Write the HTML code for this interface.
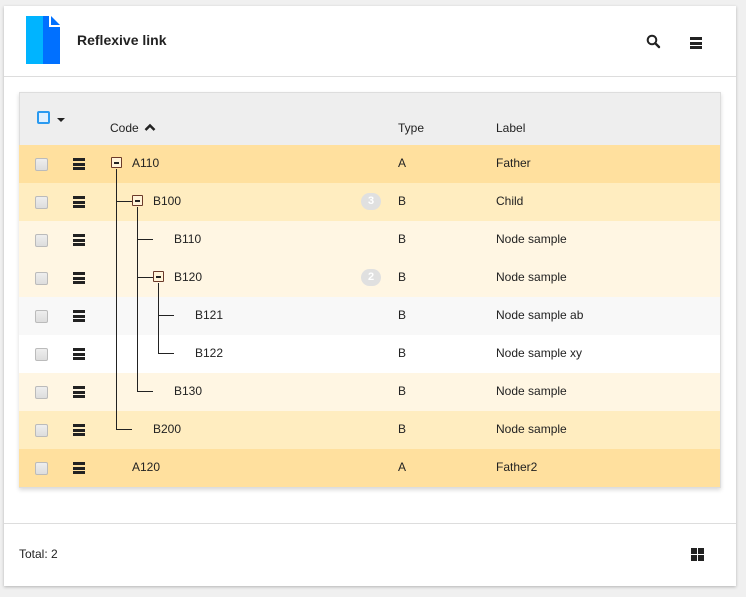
<!DOCTYPE html>
<html><head><style>
*{margin:0;padding:0;box-sizing:border-box}
body{width:746px;height:597px;background:#f0f0f0;font-family:"Liberation Sans",Arial,sans-serif;font-size:12px;color:#222;position:relative;overflow:hidden}
.card{position:absolute;left:4px;top:6px;width:732px;height:580px;background:#fff;box-shadow:0 1px 3px rgba(0,0,0,.25)}
.a{position:absolute}
.row{position:absolute;left:19px;width:701px;height:38px}
.cb{position:absolute;left:16px;top:13px;width:13px;height:13px;border:1px solid #bbb;border-radius:2px;background:linear-gradient(#eee,#ddd)}
.hm{position:absolute;left:54px;top:13px;width:12px;height:12px;border-top:3px solid #222;border-bottom:3px solid #222}
.hm:after{content:"";position:absolute;left:0;top:1.5px;width:12px;height:3px;background:#222}
.t{position:absolute;top:11px;font-size:12px}
.box{position:absolute;width:11px;height:11px;border:1px solid #6b3a2a;background:#fff3d8;border-radius:1px}
.box:after{content:"";position:absolute;left:2px;top:4px;width:5px;height:1.5px;background:#222}
.vl{position:absolute;width:1px;background:#222}
.hl{position:absolute;height:1px;background:#222}
.badge{position:absolute;left:342px;top:10px;width:20px;height:17px;border-radius:9px;background:#e0e0e0;color:#fff;font-weight:bold;font-size:11px;text-align:center;line-height:17px}
</style></head><body>
<div class="card"></div>
<svg class="a" style="left:26px;top:16px" width="35" height="48" viewBox="0 0 35 48">
<rect x="0" y="0" width="17" height="48" fill="#00b4ff"/>
<rect x="17" y="0" width="17" height="48" fill="#0070ff"/>
<polygon points="23,0 34,0 34,11 23,11" fill="#fff"/>
<polygon points="25,0 34,9 25,9" fill="#0070ff"/>
</svg>
<div class="a" style="left:77px;top:32px;font-size:14px;font-weight:bold;color:#222">Reflexive link</div>
<svg class="a" style="left:646px;top:34px" width="16" height="16" viewBox="0 0 16 16"><circle cx="6" cy="6" r="4.3" fill="none" stroke="#222" stroke-width="2"/><path d="M9.2 9.2 L13 13" stroke="#222" stroke-width="2.4" stroke-linecap="round"/></svg>
<div class="a" style="left:690px;top:37px;width:12px;height:12px;border-top:3px solid #222;border-bottom:3px solid #222"><div style="margin-top:1.5px;height:3px;background:#222"></div></div>
<div class="a" style="left:4px;top:76px;width:732px;height:1px;background:#ddd"></div>
<div class="a" style="left:19px;top:92px;width:702px;height:396px;border:1px solid #ddd;box-shadow:0 2px 4px rgba(0,0,0,.15);background:#eee"></div>
<div class="a" style="left:37px;top:111px;width:13px;height:13px;border:2px solid #2a9af0;background:#e0f0ff;border-radius:2px"></div>
<div class="a" style="left:57px;top:118px;border-left:4px solid transparent;border-right:4px solid transparent;border-top:4px solid #222"></div>
<div class="a" style="left:110px;top:121px">Code</div>
<svg class="a" style="left:144px;top:123px" width="12" height="9" viewBox="0 0 12 9"><path d="M1.5 7 L6 2.5 L10.5 7" fill="none" stroke="#222" stroke-width="2.5"/></svg>
<div class="a" style="left:398px;top:121px">Type</div>
<div class="a" style="left:496px;top:121px">Label</div>

<div class="row" style="top:145px;background:#ffe09e"><div class="cb"></div><div class="hm"></div><div class="t" style="left:113px">A110</div><div class="t" style="left:379px">A</div><div class="t" style="left:477px">Father</div></div>
<div class="row" style="top:183px;background:#ffedc0"><div class="cb"></div><div class="hm"></div><div class="badge">3</div><div class="t" style="left:134px">B100</div><div class="t" style="left:379px">B</div><div class="t" style="left:477px">Child</div></div>
<div class="row" style="top:221px;background:#fff6e3"><div class="cb"></div><div class="hm"></div><div class="t" style="left:155px">B110</div><div class="t" style="left:379px">B</div><div class="t" style="left:477px">Node sample</div></div>
<div class="row" style="top:259px;background:#fff6e3"><div class="cb"></div><div class="hm"></div><div class="badge">2</div><div class="t" style="left:155px">B120</div><div class="t" style="left:379px">B</div><div class="t" style="left:477px">Node sample</div></div>
<div class="row" style="top:297px;background:#f8f8f8"><div class="cb"></div><div class="hm"></div><div class="t" style="left:176px">B121</div><div class="t" style="left:379px">B</div><div class="t" style="left:477px">Node sample ab</div></div>
<div class="row" style="top:335px;background:#fff"><div class="cb"></div><div class="hm"></div><div class="t" style="left:176px">B122</div><div class="t" style="left:379px">B</div><div class="t" style="left:477px">Node sample xy</div></div>
<div class="row" style="top:373px;background:#fff6e3"><div class="cb"></div><div class="hm"></div><div class="t" style="left:155px">B130</div><div class="t" style="left:379px">B</div><div class="t" style="left:477px">Node sample</div></div>
<div class="row" style="top:411px;background:#ffedc0"><div class="cb"></div><div class="hm"></div><div class="t" style="left:134px">B200</div><div class="t" style="left:379px">B</div><div class="t" style="left:477px">Node sample</div></div>
<div class="row" style="top:449px;background:#ffe09e"><div class="cb"></div><div class="hm"></div><div class="t" style="left:113px">A120</div><div class="t" style="left:379px">A</div><div class="t" style="left:477px">Father2</div></div>

<div class="vl" style="left:116px;top:169px;height:261px"></div>
<div class="hl" style="left:116px;top:429px;width:16px"></div>
<div class="hl" style="left:116px;top:201px;width:17px"></div>
<div class="vl" style="left:137px;top:207px;height:185px"></div>
<div class="hl" style="left:137px;top:239px;width:16px"></div>
<div class="hl" style="left:137px;top:277px;width:17px"></div>
<div class="hl" style="left:137px;top:391px;width:16px"></div>
<div class="vl" style="left:158px;top:283px;height:71px"></div>
<div class="hl" style="left:158px;top:315px;width:16px"></div>
<div class="hl" style="left:158px;top:353px;width:16px"></div>
<div class="box" style="left:111px;top:157px"></div>
<div class="box" style="left:132px;top:195px"></div>
<div class="box" style="left:153px;top:271px"></div>

<div class="a" style="left:4px;top:523px;width:732px;height:1px;background:#ddd"></div>
<div class="a" style="left:19px;top:547px">Total: 2</div>
<div class="a" style="left:691px;top:548px;width:6px;height:6px;background:#222"></div>
<div class="a" style="left:698px;top:548px;width:6px;height:6px;background:#222"></div>
<div class="a" style="left:691px;top:555px;width:6px;height:6px;background:#222"></div>
<div class="a" style="left:698px;top:555px;width:6px;height:6px;background:#222"></div>
</body></html>
